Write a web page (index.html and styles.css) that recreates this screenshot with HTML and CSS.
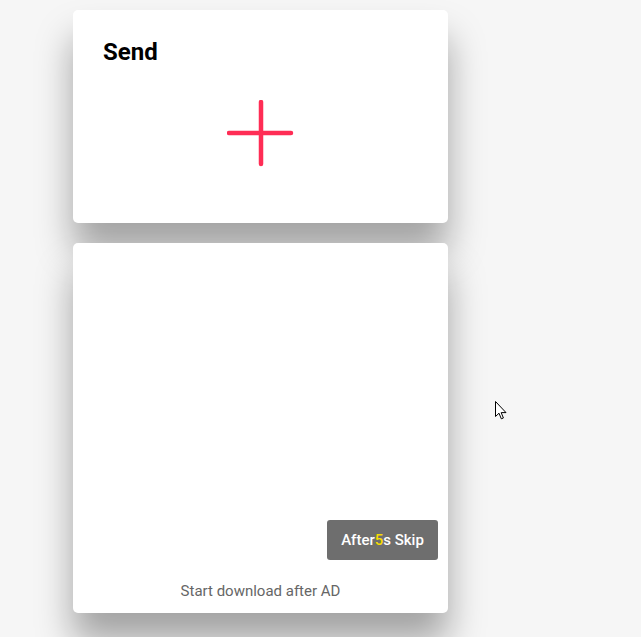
FILE: index.html
```
<!DOCTYPE html>
<html>
<head>
<meta charset="utf-8">
<link rel="stylesheet" href="styles.css">
</head>
<body>
<main class="stack">
  <section class="card send">
    <h1 class="title">Send</h1>
    <div class="add">
      <svg width="68" height="68" viewBox="0 0 68 68"><path d="M34 2V64M2 33H64" stroke="#ff2d55" stroke-width="4.5" stroke-linecap="round" fill="none"/></svg>
    </div>
  </section>
  <section class="card ad">
    <div class="ad-body">
      <button class="skip">After<span class="count">5</span>s Skip</button>
    </div>
    <p class="note">Start download after AD</p>
  </section>
</main>
<svg class="cursor" width="13" height="20" viewBox="0 0 13 20"><path d="M0.5 0.5V15.5L4 12.2L6.3 17.8L8.4 17L6.2 11.6H11Z" fill="#fff" stroke="#000" stroke-width="1" stroke-linejoin="round"/></svg>
</body>
</html>
```
FILE: styles.css
```
html, body { margin: 0; padding: 0; }
body {
  background: #f6f6f6;
  font-family: Roboto, "Liberation Sans", sans-serif;
  width: 641px;
  height: 637px;
  overflow: hidden;
  position: relative;
}
.stack {
  width: 375px;
  margin-left: 73px;
  padding-top: 10px;
  display: flex;
  flex-direction: column;
  gap: 20px;
}
.card {
  background: #fff;
  border-radius: 5px;
  box-shadow: 0 28px 36px rgba(0,0,0,0.34);
}
.send {
  height: 213px;
  box-sizing: border-box;
  padding: 27px 30px 0;
}
.title {
  margin: 0;
  font-size: 24px;
  font-weight: 700;
  color: #000;
  line-height: 30px;
}
.add {
  display: flex;
  justify-content: center;
  margin-top: 33px;
  margin-left: -30px;
  margin-right: -30px;
  padding-left: 1px;
}
.add svg { display: block; }
.ad {
  height: 370px;
  display: flex;
  flex-direction: column;
}
.ad-body {
  flex: 1;
  display: flex;
  justify-content: flex-end;
  align-items: flex-end;
  padding: 0 10px;
}
.skip {
  width: 111px;
  height: 40px;
  border: none;
  border-radius: 3px;
  background: #6e6e6e;
  color: #fff;
  font-family: Roboto, "Liberation Sans", sans-serif;
  font-size: 15px;
  font-weight: 500;
  padding: 0;
}
.count { color: #f7dc00; }
.note {
  margin: 0;
  padding: 21px 0 11px;
  text-align: center;
  font-size: 15px;
  line-height: 21px;
  color: #666;
}
.cursor {
  position: absolute;
  left: 495px;
  top: 401px;
}
```
